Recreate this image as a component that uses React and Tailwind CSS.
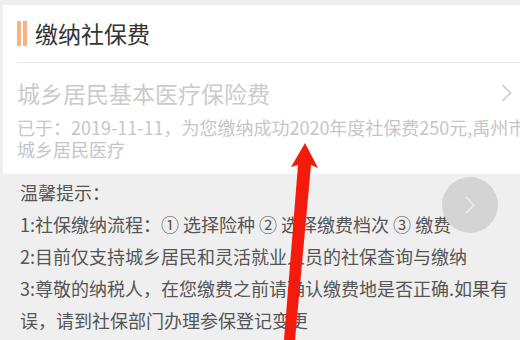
import React from 'react';

const font = { fontFamily: '"Noto Sans CJK SC", "Noto Sans", sans-serif' };

function ChevronRight({ className }) {
  return (
    <svg className={className} viewBox="0 0 12 20" fill="none" stroke="currentColor" strokeWidth="1.6">
      <polyline points="2,2 10,10 2,18" />
    </svg>
  );
}

export default function App() {
  const tips = [
    '1:社保缴纳流程：① 选择险种 ② 选择缴费档次 ③ 缴费',
    '2:目前仅支持城乡居民和灵活就业人员的社保查询与缴纳',
    '3:尊敬的纳税人，在您缴费之前请确认缴费地是否正确.如果有',
    '误，请到社保部门办理参保登记变更',
  ];

  return (
    <div
      className="relative w-[520px] h-[340px] overflow-hidden bg-[#efefef] pt-[5px] pl-[3px]"
      style={font}
    >
      {/* card */}
      <div className="bg-white">
        <div className="flex items-center h-[57px] pl-[14px]">
          <div className="flex gap-[2px] h-[25px] mr-[8px]">
            <span className="w-[4px] bg-[#f9b283]" />
            <span className="w-[4px] bg-[#f9b283]" />
          </div>
          <span className="text-[23px] leading-none text-[#333]">缴纳社保费</span>
        </div>
        <div className="ml-[14px] border-t border-[#e6e6e6]" />

        <div className="pl-[14px] pt-[15px] pb-[14px]">
          <div className="flex items-center justify-between pr-[7px] h-[30px]">
            <span className="text-[23px] leading-[30px] text-[#cbcbcb]">城乡居民基本医疗保险费</span>
            <ChevronRight className="w-[13px] h-[20px] text-[#cccccc]" />
          </div>
          <div className="mt-[8px] text-[18px] leading-[22px] text-[#c6c6c6]">
            <p className="whitespace-nowrap">
              已于：2019-11-11，为您缴纳成功2020年度社保费250元,禹州市
            </p>
            <p>城乡居民医疗</p>
          </div>
        </div>
      </div>

      {/* tips */}
      <div className="pl-[17px] pt-[2px] text-[18px] leading-[32px] text-[#555]">
        <div className="whitespace-nowrap">温馨提示：</div>
        {tips.map((t) => (
          <div key={t} className="whitespace-nowrap">{t}</div>
        ))}
      </div>

      {/* floating button */}
      <div className="absolute left-[442px] top-[177px] w-[56px] h-[56px] rounded-full bg-[#d4d4d4] flex items-center justify-center">
        <ChevronRight className="w-[12px] h-[20px] text-[#ececec]" />
      </div>

      {/* red arrow annotation */}
      <svg className="absolute left-0 top-0" width="520" height="340">
        <polygon
          points="305,143 291,167 298,165 284,340 295,340 311,165 318,168"
          fill="#f51b0c"
        />
      </svg>
    </div>
  );
}
